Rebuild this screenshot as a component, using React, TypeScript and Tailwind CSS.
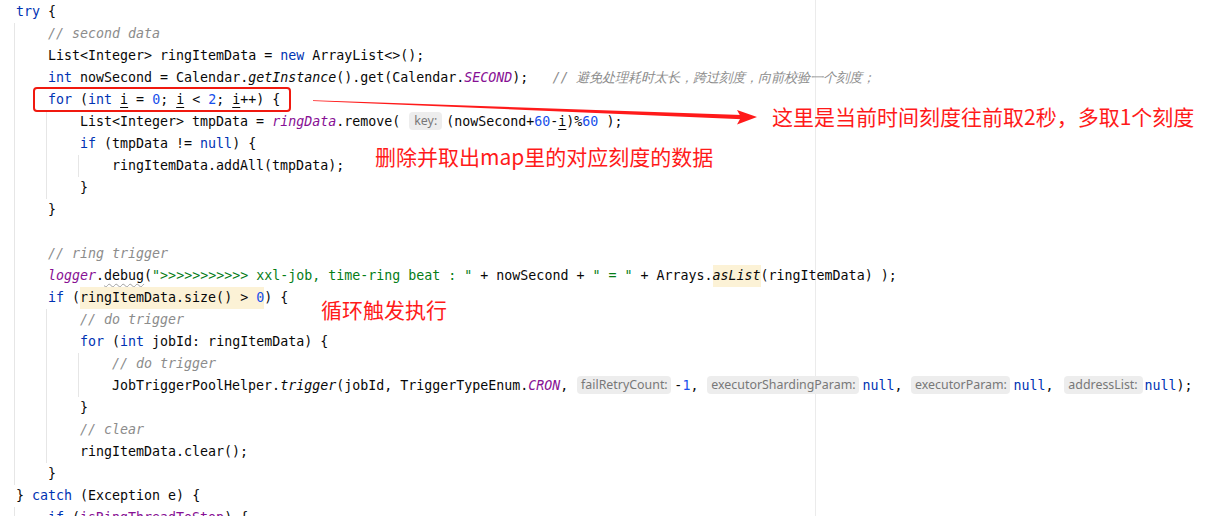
import React from "react";

const K = ({ children }: { children: React.ReactNode }) => <span className="text-[#0033b3]">{children}</span>;
const N = ({ children }: { children: React.ReactNode }) => <span className="text-[#1750eb]">{children}</span>;
const C = ({ children }: { children: React.ReactNode }) => <span className="text-[#8c8c8c] italic">{children}</span>;
const S = ({ children }: { children: React.ReactNode }) => <span className="text-[#067d17]">{children}</span>;
const F = ({ children }: { children: React.ReactNode }) => <span className="text-[#871094] italic">{children}</span>;
const M = ({ children }: { children: React.ReactNode }) => <span className="italic">{children}</span>;
const U = ({ children }: { children: React.ReactNode }) => <span className="underline underline-offset-[3px] decoration-[1px]">{children}</span>;

const Hint = ({ label, w, cls }: { label: string; w: string; cls: string }) => (
  <span
    className={`inline-flex items-center justify-center align-middle h-[18px] -mt-[2px] rounded-[4px] bg-[#ededed] text-[#787878] font-['Noto_Sans',sans-serif] text-[12.4px] leading-none not-italic whitespace-nowrap ${w} ${cls}`}
  >
    {label}
  </span>
);

const Line = ({ ind, children }: { ind: number; children?: React.ReactNode }) => {
  const pad = ["pl-[16px]", "pl-[48px]", "pl-[80px]", "pl-[112px]"][ind];
  return <div className={`h-[22px] leading-[22px] whitespace-pre ${pad}`}>{children}</div>;
};

const HL = ({ children }: { children: React.ReactNode }) => (
  <span className="inline-block h-[22px] align-top bg-[#fcf2d6]">{children}</span>
);

export default function App() {
  return (
    <div className="relative w-[1209px] h-[516px] overflow-hidden bg-white text-[#080808] font-['DejaVu_Sans_Mono',monospace] text-[13.3px]">
      {/* right margin guide */}
      <div className="absolute left-[815px] top-0 w-[1px] h-[516px] bg-[#ebebeb]" />
      {/* indent guides */}
      <div className="absolute left-[14px] top-[23px] w-[1px] h-[462px] bg-[#e6e6e6]" />
      <div className="absolute left-[14px] top-[507px] w-[1px] h-[12px] bg-[#e6e6e6]" />
      <div className="absolute left-[46px] top-[111px] w-[1px] h-[88px] bg-[#e6e6e6]" />
      <div className="absolute left-[78px] top-[155px] w-[1px] h-[22px] bg-[#e6e6e6]" />
      <div className="absolute left-[46px] top-[309px] w-[1px] h-[154px] bg-[#e6e6e6]" />
      <div className="absolute left-[78px] top-[353px] w-[1px] h-[44px] bg-[#e6e6e6]" />

      <div className="relative pt-[1px]">
        <Line ind={0}><K>try</K>{" {"}</Line>
        <Line ind={1}><C>// second data</C></Line>
        <Line ind={1}>{"List<Integer> ringItemData = "}<K>new</K>{" ArrayList<>();"}</Line>
        <Line ind={1}>
          <K>int</K>{" nowSecond = Calendar."}<M>getInstance</M>{"().get(Calendar."}<F>SECOND</F>{");   "}
          <C>// 避免处理耗时太长，跨过刻度，向前校验一个刻度；</C>
        </Line>
        <Line ind={1}>
          <K>for</K>{" ("}<K>int</K>{" "}<U>i</U>{" = "}<N>0</N>{"; "}<U>i</U>{" < "}<N>2</N>{"; "}<U>i</U>{"++) {"}
        </Line>
        <Line ind={2}>
          {"List<Integer> tmpData = "}<F>ringData</F>{".remove("}
          <Hint label="key:" w="w-[33px]" cls="ml-[9px] mr-[4px]" />
          {"(nowSecond+"}<N>60</N>{"-"}<U>i</U>{")%"}<N>60</N>{" );"}
        </Line>
        <Line ind={2}><K>if</K>{" (tmpData != "}<K>null</K>{") {"}</Line>
        <Line ind={3}>ringItemData.addAll(tmpData);</Line>
        <Line ind={2}>{"}"}</Line>
        <Line ind={1}>{"}"}</Line>
        <Line ind={1} />
        <Line ind={1}><C>// ring trigger</C></Line>
        <Line ind={1}>
          <F>logger</F>{"."}
          <span className="underline decoration-wavy decoration-[#a0a0a0] decoration-[1px] underline-offset-[3px]">debug</span>
          {"("}
          <S>{"\">>>>>>>>>>> xxl-job, time-ring beat : \""}</S>{" + nowSecond + "}<S>{"\" = \""}</S>{" + Arrays."}
          <HL><M>asList</M></HL>{"(ringItemData) );"}
        </Line>
        <Line ind={1}>
          <K>if</K>{" ("}<HL>{"ringItemData.size() > "}<N>0</N></HL>{") {"}
        </Line>
        <Line ind={2}><C>// do trigger</C></Line>
        <Line ind={2}><K>for</K>{" ("}<K>int</K>{" jobId: ringItemData) {"}</Line>
        <Line ind={3}><C>// do trigger</C></Line>
        <Line ind={3}>
          {"JobTriggerPoolHelper."}<M>trigger</M>{"(jobId, TriggerTypeEnum."}<F>CRON</F>{","}
          <Hint label="failRetryCount:" w="w-[94px]" cls="ml-[9px] mr-[3px]" />
          {"-"}<N>1</N>{","}
          <Hint label="executorShardingParam:" w="w-[152px]" cls="ml-[9px] mr-[3px]" />
          <K>null</K>{","}
          <Hint label="executorParam:" w="w-[99px]" cls="ml-[9px] mr-[3px]" />
          <K>null</K>{","}
          <Hint label="addressList:" w="w-[79px]" cls="ml-[10px] mr-[2px]" />
          <K>null</K>{");"}
        </Line>
        <Line ind={2}>{"}"}</Line>
        <Line ind={2}><C>// clear</C></Line>
        <Line ind={2}>ringItemData.clear();</Line>
        <Line ind={1}>{"}"}</Line>
        <Line ind={0}>{"} "}<K>catch</K>{" (Exception e) {"}</Line>
        <Line ind={1}><K>if</K>{" ("}<span className="text-[#871094]">isRingThreadToStop</span>{") {"}</Line>
      </div>

      {/* red box */}
      <div className="absolute left-[33px] top-[87px] w-[258px] h-[25px] border-2 border-[#f0190f] rounded-[4px]" />

      {/* arrow */}
      <svg className="absolute left-0 top-0 pointer-events-none" width="1209" height="516" viewBox="0 0 1209 516">
        <polygon points="313,100.2 742,115 742,119.2 313,100.9" fill="#ff1a1a" />
        <polygon points="737,110 757,117 737,124.5 741,117.2" fill="#ff1a1a" />
      </svg>

      {/* annotations */}
      <div className="absolute left-[772px] top-[106px] text-[21px] leading-none text-[#ff1a1a] whitespace-nowrap font-['Noto_Sans_CJK_SC',sans-serif]">
        这里是当前时间刻度往前取2秒，多取1个刻度
      </div>
      <div className="absolute left-[375px] top-[146px] text-[21px] leading-none text-[#ff1a1a] whitespace-nowrap font-['Noto_Sans_CJK_SC',sans-serif]">
        删除并取出map里的对应刻度的数据
      </div>
      <div className="absolute left-[321px] top-[299px] text-[21px] leading-none text-[#ff1a1a] whitespace-nowrap font-['Noto_Sans_CJK_SC',sans-serif]">
        循环触发执行
      </div>
    </div>
  );
}
